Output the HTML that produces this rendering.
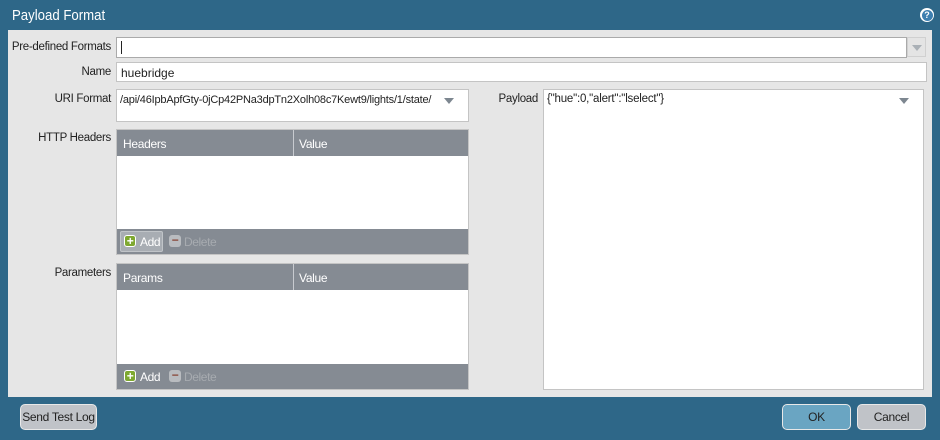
<!DOCTYPE html>
<html><head><style>
*{box-sizing:border-box;margin:0;padding:0}
body{width:940px;height:440px;background:#2e6788;font-family:"Liberation Sans",sans-serif;font-size:12px;color:#222;position:relative;overflow:hidden;white-space:nowrap}
.a{position:absolute}
.title{left:12px;top:7px;color:#fff;font-size:15px;transform:scaleX(.88);transform-origin:left}
.content{left:8px;top:30px;width:924px;height:367px;background:#e6e6e6}
.lbl{font-size:11.5px;letter-spacing:-.3px;text-align:right;width:100px;color:#222}
.inp{background:#fff;border:1px solid #c4c4c4}
.grid{background:#fff;border:1px solid #c4c4c4}
.gh{position:absolute;left:0;top:0;right:0;height:26px;background:#858b93;color:#fff;font-size:12px;letter-spacing:-.3px}
.gh span{position:absolute;top:7px}
.gf{position:absolute;left:0;bottom:0;right:0;height:25px;background:#858b93;color:#fff;letter-spacing:-.4px}
.ic{position:absolute;width:12px;height:12px;border-radius:3px;top:6px;color:#fff;font-weight:bold;font-size:12px;line-height:11px;text-align:center}
.btn{border:1px solid #e8e8e8;border-radius:5px;text-align:center;font-size:12px;line-height:24px;height:26px;letter-spacing:-.3px}
.tri{width:0;height:0;border-left:5px solid transparent;border-right:5px solid transparent;border-top:6px solid #7d8790}
</style></head><body>
<div class="a title">Payload Format</div>
<div class="a" style="left:920px;top:8px;width:14px;height:14px;border-radius:50%;background:#fff;"><div style="position:absolute;left:1.5px;top:1.5px;width:11px;height:11px;border-radius:50%;background:#3d7fb0;color:#fff;font-size:9px;font-weight:bold;text-align:center;line-height:11px">?</div></div>
<div class="a content"></div>

<div class="a lbl" style="left:11px;top:41px">Pre-defined Formats</div>
<div class="a inp" style="left:116px;top:37px;width:791px;height:21px;border-color:#aaa"><div class="a" style="left:4px;top:3px;width:1px;height:13px;background:#222"></div></div>
<div class="a" style="left:907px;top:37px;width:19px;height:20px;background:#e4e4e4;border:1px solid #d0d0d0"><div class="a tri" style="left:4px;top:7px;border-top-color:#aab0b6"></div></div>

<div class="a lbl" style="left:11px;top:66px">Name</div>
<div class="a inp" style="left:116px;top:62px;width:811px;height:20px"><span class="a" style="left:4px;top:3px">huebridge</span></div>

<div class="a lbl" style="left:11px;top:93px">URI Format</div>
<div class="a inp" style="left:116px;top:89px;width:353px;height:33px"><span class="a" style="left:3px;top:4px;font-size:11px;letter-spacing:-.2px">/api/46IpbApfGty-0jCp42PNa3dpTn2Xolh08c7Kewt9/lights/1/state/</span><div class="a tri" style="left:327px;top:8px"></div></div>

<div class="a lbl" style="left:11px;top:132px">HTTP Headers</div>
<div class="a grid" style="left:116px;top:129px;width:353px;height:126px">
<div class="gh"><span style="left:6px">Headers</span><div class="a" style="left:176px;top:0;width:1px;height:26px;background:#c8cbd0"></div><span style="left:182px">Value</span></div>
<div class="gf"><div class="a" style="left:3px;top:2px;width:43px;height:21px;background:#a8adb3;border:1px solid #c0c4c8;border-radius:2px"></div><div class="ic" style="left:7px;background:#7ea830;border:1px solid #fff">+</div><span class="a" style="left:23px;top:6px">Add</span><div class="ic" style="left:52px;background:#b9bcc0;color:#8a4a3c">&minus;</div><span class="a" style="left:67px;top:6px;color:#a7abb0">Delete</span></div>
</div>

<div class="a lbl" style="left:11px;top:267px">Parameters</div>
<div class="a grid" style="left:116px;top:263px;width:353px;height:127px">
<div class="gh"><span style="left:6px">Params</span><div class="a" style="left:176px;top:0;width:1px;height:26px;background:#c8cbd0"></div><span style="left:182px">Value</span></div>
<div class="gf"><div class="ic" style="left:7px;background:#7ea830;border:1px solid #fff">+</div><span class="a" style="left:23px;top:6px">Add</span><div class="ic" style="left:52px;background:#b9bcc0;color:#8a4a3c">&minus;</div><span class="a" style="left:67px;top:6px;color:#a7abb0">Delete</span></div>
</div>

<div class="a lbl" style="left:438px;top:93px">Payload</div>
<div class="a inp" style="left:543px;top:89px;width:381px;height:301px"><span class="a" style="left:3px;top:3px;font-size:11.5px;letter-spacing:-.2px">{"hue":0,"alert":"lselect"}</span><div class="a tri" style="left:355px;top:8px"></div></div>

<div class="a btn" style="left:20px;top:404px;width:77px;background:#c0c3c8">Send Test Log</div>
<div class="a btn" style="left:782px;top:404px;width:69px;background:#6aa5c2">OK</div>
<div class="a btn" style="left:857px;top:404px;width:69px;background:#c0c3c8">Cancel</div>
</body></html>
